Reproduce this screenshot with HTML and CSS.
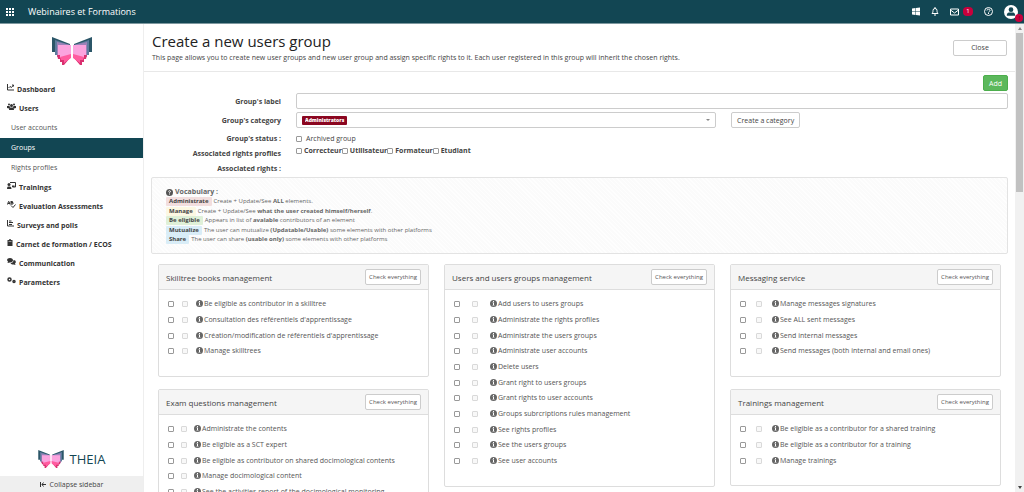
FILE: index.html
```
<!DOCTYPE html>
<html lang="en">
<head>
    <meta charset="UTF-8">
    <meta name="viewport" content="width=device-width, initial-scale=1.0">
    <title>Create a new users group</title>
    <link rel="stylesheet" href="styles.css">
</head>
<body>

<!-- Shared symbols -->
<svg class="symbols" aria-hidden="true">
    <symbol id="butterfly" viewBox="0 0 40 28">
        <g id="wing">
            <path fill="#2b5668" d="M0 0L18 7V9L5 17H3V15H0Z"/>
            <path fill="#5f7c9e" d="M3 3L18 8V12L5 20V18H3Z"/>
            <path fill="#9c82b8" d="M5 5L18 8V18L8 22V20H5Z"/>
            <path fill="#d9306f" d="M5 18H8V20L18 18V21L12 28H10V25H8V22H6Z"/>
            <path fill="#fba3de" d="M6 8H19V19L8 21V18H6Z"/>
            <path fill="#ff5b9f" d="M8 20L19 17V21L12 26V23H9Z"/>
        </g>
        <use href="#wing" transform="translate(40 0) scale(-1 1)"/>
    </symbol>
    <symbol id="info" viewBox="0 0 14 14">
        <circle cx="7" cy="7" r="7" fill="#666"/>
        <path fill="#fff" d="M6 2h2v2H6zM5 5h3v5h1v1H5v-1h1V6H5z"/>
    </symbol>
</svg>

<header class="topbar">
    <svg class="apps" viewBox="0 0 8 8"><path fill="#fff" d="M0 0h2v2H0zM3 0h2v2H3zM6 0h2v2H6zM0 3h2v2H0zM3 3h2v2H3zM6 3h2v2H6zM0 6h2v2H0zM3 6h2v2H3zM6 6h2v2H6z"/></svg>
    <span class="brand">Webinaires et Formations</span>
    <div class="tools">
        <svg class="windows" viewBox="0 0 16 16"><path fill="#fff" d="M0 2l7-1v7H0zM8 1l8-1v8H8zM0 9h7v6l-7-1zM8 9h8v7l-8-1z"/></svg>
        <svg class="bell" viewBox="0 0 16 18"><path fill="none" stroke="#fff" stroke-width="2" d="M2 13c2-2 2-4 2-6a4 4 0 0 1 8 0c0 2 0 4 2 6zM8 0v3M6 16h4"/></svg>
        <a href="#" class="mail" aria-label="Messages">
            <svg viewBox="0 0 18 14"><path fill="none" stroke="#fff" stroke-width="2" d="M1 1h16v12H1zM1 3l8 6 8-6"/></svg>
            <span class="count">1</span>
        </a>
        <svg class="help" viewBox="0 0 18 18"><circle cx="9" cy="9" r="8" fill="none" stroke="#fff" stroke-width="2"/><path fill="none" stroke="#fff" stroke-width="2" d="M6 7c0-4 6-3 6 0 0 2-3 2-3 4M9 12v2"/></svg>
        <div class="avatar">
            <svg viewBox="0 0 30 30"><circle cx="15" cy="15" r="15" fill="#fff"/><circle cx="15" cy="10" r="5" fill="#124653"/><path fill="#124653" d="M6 23c0-8 5-7 9-7s9-1 9 7z"/></svg>
            <span class="alert">!</span>
        </div>
    </div>
</header>

<div class="layout">
    <nav class="sidebar">
        <svg class="logo" viewBox="0 0 40 28"><use href="#butterfly"/></svg>
        <ul class="menu">
            <li><a href="#"><svg class="w7" viewBox="0 0 14 14"><path fill="none" stroke="#333" stroke-width="2" d="M1 0v12h13M3 8l3-3 3 2 4-5M10 2h3v3"/></svg>Dashboard</a></li>
            <li><a href="#"><svg class="w9" viewBox="0 0 18 14"><g fill="#333"><circle cx="4" cy="3" r="2"/><circle cx="14" cy="3" r="2"/><circle cx="9" cy="5" r="3"/><path d="M0 10V6h5l1 3-2 2zM18 10V6h-5l-1 3 2 2zM4 14c0-5 2-5 5-5s5 0 5 5z"/></g></svg>Users</a></li>
            <li class="sub"><a href="#">User accounts</a></li>
            <li class="sub active"><a href="#">Groups</a></li>
            <li class="sub"><a href="#">Rights profiles</a></li>
            <li><a href="#"><svg class="w9" viewBox="0 0 18 14"><path fill="none" stroke="#333" stroke-width="2" d="M6 1h11v9h-6"/><circle cx="4" cy="5" r="3" fill="#333"/><path fill="#333" d="M0 14c0-5 2-5 4-5s5 0 5 5zM10 7h5v3h-5z"/></svg>Trainings</a></li>
            <li><a href="#"><svg class="w9" viewBox="0 0 18 14"><path fill="none" stroke="#333" stroke-width="2" d="M1 7l2-6h1l2 6M2 5h4M8 0v7M8 1h3v2H8h4v3H8M8 9l4 4 5-6"/></svg>Evaluation Assessments</a></li>
            <li><a href="#"><svg class="w7" viewBox="0 0 14 14"><path fill="none" stroke="#333" stroke-width="2" d="M1 0v12h13M4 2h5M4 5h8M4 9h6"/></svg>Surveys and polls</a></li>
            <li><a href="#"><svg class="w6" viewBox="0 0 12 14"><path fill="#333" d="M1 2h3a2 2 0 0 1 4 0h3v12H1z"/><path fill="#fff" d="M3 4h6v1H3z"/></svg>Carnet de formation / ECOS</a></li>
            <li><a href="#"><svg class="w9" viewBox="0 0 18 14"><path fill="#333" d="M6 0c8 0 8 9 0 9l-5 1 1-3C-2 4 1 0 6 0z"/><path fill="#333" d="M13 4c5 0 6 5 3 7l1 3-4-1c-3 0-5-1-6-3 5 0 6-3 6-6z"/></svg>Communication</a></li>
            <li><a href="#"><svg class="w9" viewBox="0 0 18 14"><g fill="none" stroke="#333"><circle cx="5" cy="5" r="3" stroke-width="3"/><circle cx="14" cy="9" r="2" stroke-width="3"/></g></svg>Parameters</a></li>
        </ul>
        <div class="product">
            <svg viewBox="0 0 40 28"><use href="#butterfly"/></svg>
            <span>THEIA</span>
        </div>
        <button type="button" class="collapse"><svg viewBox="0 0 12 10"><path fill="none" stroke="#333" stroke-width="2" d="M1 0v10M12 5H4M7 1L4 5l3 4"/></svg>Collapse sidebar</button>
    </nav>

    <main class="content">
        <div class="page-head">
            <div>
                <h1>Create a new users group</h1>
                <p>This page allows you to create new user groups and new user group and assign specific rights to it. Each user registered in this group will inherit the chosen rights.</p>
            </div>
            <button type="button" class="btn close">Close</button>
        </div>

        <form class="group-form">
            <div class="actions"><button type="button" class="btn add">Add</button></div>
            <div class="form-row">
                <label for="label">Group's label</label>
                <input type="text" id="label">
            </div>
            <div class="form-row">
                <label for="category">Group's category</label>
                <div class="category">
                    <select id="category"><option>Administrators</option></select>
                    <button type="button" class="btn">Create a category</button>
                </div>
            </div>
            <div class="form-row short">
                <span class="name">Group's status :</span>
                <div class="checks light"><label><input type="checkbox">Archived group</label></div>
            </div>
            <div class="form-row short">
                <span class="name">Associated rights profiles</span>
                <div class="checks">
                    <label><input type="checkbox">Correcteur</label>
                    <label><input type="checkbox">Utilisateur</label>
                    <label><input type="checkbox">Formateur</label>
                    <label><input type="checkbox">Etudiant</label>
                </div>
            </div>
            <div class="form-row short">
                <span class="name">Associated rights :</span>
            </div>

            <div class="vocabulary">
                <h2><svg viewBox="0 0 14 14"><circle cx="7" cy="7" r="7" fill="#555"/><path fill="none" stroke="#fff" stroke-width="2" d="M5 5c0-2 4-2 4 0 0 1-2 1-2 3M7 9v2"/></svg>Vocabulary :</h2>
                <p><b class="tag red">Administrate</b>Create + Update/See <b>ALL</b> elements.</p>
                <p><b class="tag yellow">Manage</b>Create + Update/See <b>what the user created himself/herself</b>.</p>
                <p><b class="tag green">Be eligible</b>Appears in list of <b>avalable</b> contributors of an element</p>
                <p><b class="tag blue">Mutualize</b>The user can mutualize <b>(Updatable/Usable)</b> some elements with other platforms</p>
                <p><b class="tag blue">Share</b>The user can share <b>(usable only)</b> some elements with other platforms</p>
            </div>

            <div class="rights">
                <div class="column">
                    <section class="card">
                        <header><h3>Skilltree books management</h3><button type="button" class="btn">Check everything</button></header>
                        <ul>
                            <li><label><input type="checkbox"><input type="checkbox" disabled><svg><use href="#info"/></svg>Be eligible as contributor in a skilltree</label></li>
                            <li><label><input type="checkbox"><input type="checkbox" disabled><svg><use href="#info"/></svg>Consultation des référentiels d'apprentissage</label></li>
                            <li><label><input type="checkbox"><input type="checkbox" disabled><svg><use href="#info"/></svg>Création/modification de référentiels d'apprentissage</label></li>
                            <li><label><input type="checkbox"><input type="checkbox" disabled><svg><use href="#info"/></svg>Manage skilltrees</label></li>
                        </ul>
                    </section>
                    <section class="card narrow">
                        <header><h3>Exam questions management</h3><button type="button" class="btn">Check everything</button></header>
                        <ul>
                            <li><label><input type="checkbox"><input type="checkbox" disabled><svg><use href="#info"/></svg>Administrate the contents</label></li>
                            <li><label><input type="checkbox"><input type="checkbox" disabled><svg><use href="#info"/></svg>Be eligible as a SCT expert</label></li>
                            <li><label><input type="checkbox"><input type="checkbox" disabled><svg><use href="#info"/></svg>Be eligible as contributor on shared docimological contents</label></li>
                            <li><label><input type="checkbox"><input type="checkbox" disabled><svg><use href="#info"/></svg>Manage docimological content</label></li>
                            <li><label><input type="checkbox"><input type="checkbox" disabled><svg><use href="#info"/></svg>See the activities report of the docimological monitoring</label></li>
                        </ul>
                    </section>
                </div>
                <div class="column">
                    <section class="card wide">
                        <header><h3>Users and users groups management</h3><button type="button" class="btn">Check everything</button></header>
                        <ul>
                            <li><label><input type="checkbox"><input type="checkbox" disabled><svg><use href="#info"/></svg>Add users to users groups</label></li>
                            <li><label><input type="checkbox"><input type="checkbox" disabled><svg><use href="#info"/></svg>Administrate the rights profiles</label></li>
                            <li><label><input type="checkbox"><input type="checkbox" disabled><svg><use href="#info"/></svg>Administrate the users groups</label></li>
                            <li><label><input type="checkbox"><input type="checkbox" disabled><svg><use href="#info"/></svg>Administrate user accounts</label></li>
                            <li><label><input type="checkbox"><input type="checkbox" disabled><svg><use href="#info"/></svg>Delete users</label></li>
                            <li><label><input type="checkbox"><input type="checkbox" disabled><svg><use href="#info"/></svg>Grant right to users groups</label></li>
                            <li><label><input type="checkbox"><input type="checkbox" disabled><svg><use href="#info"/></svg>Grant rights to user accounts</label></li>
                            <li><label><input type="checkbox"><input type="checkbox" disabled><svg><use href="#info"/></svg>Groups subrcriptions rules management</label></li>
                            <li><label><input type="checkbox"><input type="checkbox" disabled><svg><use href="#info"/></svg>See rights profiles</label></li>
                            <li><label><input type="checkbox"><input type="checkbox" disabled><svg><use href="#info"/></svg>See the users groups</label></li>
                            <li><label><input type="checkbox"><input type="checkbox" disabled><svg><use href="#info"/></svg>See user accounts</label></li>
                        </ul>
                    </section>
                </div>
                <div class="column">
                    <section class="card medium">
                        <header><h3>Messaging service</h3><button type="button" class="btn">Check everything</button></header>
                        <ul>
                            <li><label><input type="checkbox"><input type="checkbox" disabled><svg><use href="#info"/></svg>Manage messages signatures</label></li>
                            <li><label><input type="checkbox"><input type="checkbox" disabled><svg><use href="#info"/></svg>See ALL sent messages</label></li>
                            <li><label><input type="checkbox"><input type="checkbox" disabled><svg><use href="#info"/></svg>Send internal messages</label></li>
                            <li><label><input type="checkbox"><input type="checkbox" disabled><svg><use href="#info"/></svg>Send messages (both internal and email ones)</label></li>
                        </ul>
                    </section>
                    <section class="card medium">
                        <header><h3>Trainings management</h3><button type="button" class="btn">Check everything</button></header>
                        <ul>
                            <li><label><input type="checkbox"><input type="checkbox" disabled><svg><use href="#info"/></svg>Be eligible as a contributor for a shared training</label></li>
                            <li><label><input type="checkbox"><input type="checkbox" disabled><svg><use href="#info"/></svg>Be eligible as a contributor for a training</label></li>
                            <li><label><input type="checkbox"><input type="checkbox" disabled><svg><use href="#info"/></svg>Manage trainings</label></li>
                        </ul>
                    </section>
                </div>
            </div>
        </form>
    </main>

    <div class="scrollbar" aria-hidden="true">
        <svg viewBox="0 0 9 9"><path fill="#888" d="M3 6l2-3 2 3z"/></svg>
        <div class="thumb"></div>
        <svg viewBox="0 0 9 9"><path fill="#444" d="M3 3l2 3 2-3z"/></svg>
    </div>
</div>

</body>
</html>
```
FILE: styles.css
```
* {
    box-sizing: border-box;
}
body {
    display: flex;
    flex-direction: column;
    height: 100vh;
    margin: 0;
    overflow: hidden;
    font-family: "Open Sans", sans-serif;
    font-size: 7px;
    color: #444;
    background-color: #fff;
}
h1, h2, h3, p, ul {
    margin: 0;
    padding: 0;
}
ul {
    list-style: none;
}
a {
    color: inherit;
    text-decoration: none;
}
svg {
    flex: none;
}
button, input, select {
    font-family: inherit;
    font-size: 7px;
    color: inherit;
}
.symbols {
    position: absolute;
    width: 0;
    height: 0;
}

/* Top bar */
.topbar {
    display: flex;
    align-items: center;
    flex: none;
    height: 24px;
    padding: 0 6px;
    color: #fff;
    background-color: #124653;
    border-bottom: 1px solid #7d989f;
}
.apps {
    width: 8px;
    height: 8px;
}
.brand {
    margin-left: 14px;
    font-size: 9px;
    font-weight: 500;
}
.tools {
    display: flex;
    align-items: center;
    gap: 11px;
    margin-left: auto;
}
.windows, .bell {
    width: 8px;
    height: 9px;
}
.mail {
    display: flex;
    align-items: center;
    gap: 4px;
}
.mail svg {
    width: 9px;
    height: 8px;
}
.count {
    width: 10px;
    line-height: 9px;
    font-size: 6px;
    text-align: center;
    background-color: #c8003c;
    border-radius: 4px;
}
.help {
    width: 9px;
    height: 9px;
}
.avatar {
    position: relative;
    height: 14px;
}
.avatar svg {
    width: 14px;
    height: 14px;
}
.alert {
    position: absolute;
    right: -5px;
    bottom: -3px;
    width: 8px;
    line-height: 8px;
    font-size: 6px;
    text-align: center;
    color: #5d0a25;
    background-color: #c8003c;
    border-radius: 50%;
}

.layout {
    display: flex;
    flex: 1;
    min-height: 0;
}

/* Sidebar */
.sidebar {
    display: flex;
    flex-direction: column;
    flex: none;
    width: 144px;
    border-right: 1px solid #eee;
}
.logo {
    align-self: center;
    width: 40px;
    height: 28px;
    margin: 13px 0 15px;
}
.menu li {
    height: 19px;
    line-height: 19px;
    font-weight: 700;
    color: #333;
}
.menu a {
    display: flex;
    gap: 3px;
    padding-left: 7px;
}
.menu svg {
    height: 7px;
    margin-top: 4px;
}
.w6 {
    width: 6px;
}
.w7 {
    width: 7px;
}
.w9 {
    width: 9px;
}
.menu .sub {
    height: 20px;
    line-height: 20px;
    font-weight: 400;
    color: #555;
}
.menu .sub a {
    padding-left: 11px;
}
.menu .active {
    font-weight: 500;
    color: #fff;
    background-color: #124653;
}
.product {
    display: flex;
    align-items: center;
    justify-content: center;
    gap: 6px;
    margin-top: auto;
    margin-bottom: 8px;
    line-height: 18px;
    font-size: 13px;
    color: #124653;
}
.product svg {
    width: 26px;
    height: 18px;
}
.collapse {
    display: flex;
    align-items: center;
    justify-content: center;
    gap: 4px;
    height: 16px;
    border: none;
    background-color: #efefef;
}
.collapse svg {
    width: 6px;
    height: 5px;
}

/* Page heading */
.content {
    flex: 1;
    min-width: 0;
    overflow: hidden;
}
.page-head {
    display: flex;
    align-items: center;
    justify-content: space-between;
    height: 48px;
    padding: 0 8px;
    border-bottom: 1px solid #e8e8e8;
}
h1 {
    line-height: 20px;
    font-size: 15px;
    font-weight: 500;
    color: #222;
}
.page-head p {
    line-height: 14px;
    font-weight: 500;
}
.btn {
    height: 16px;
    padding: 0 5px;
    white-space: nowrap;
    background-color: #fff;
    border: 1px solid #ccc;
    border-radius: 2px;
}
.close {
    width: 54px;
}
.add {
    width: 25px;
    padding: 0;
    color: #fff;
    background-color: #5cb85c;
    border-color: #4cae4c;
}

/* Form */
.group-form {
    padding: 3px 7px;
}
.actions {
    display: flex;
    justify-content: flex-end;
    margin-bottom: 2px;
}
.form-row {
    display: grid;
    grid-template-columns: 130px 1fr;
    column-gap: 15px;
    align-items: center;
    height: 16px;
    margin-bottom: 3px;
}
.form-row.short {
    height: 15px;
    margin-bottom: 0;
}
.form-row > label, .name {
    font-weight: 700;
    text-align: right;
    white-space: nowrap;
}
input[type="text"] {
    width: 100%;
    height: 16px;
    border: 1px solid #ccc;
    border-radius: 2px;
}
.category {
    display: flex;
    gap: 15px;
}
select {
    width: 59%;
    height: 16px;
    padding: 0 8px;
    font-size: 5px;
    font-weight: 800;
    color: #fff;
    appearance: none;
    border: 1px solid #ccc;
    border-radius: 2px;
    background: url("data:image/svg+xml,%3Csvg xmlns='http://www.w3.org/2000/svg' width='45' height='9'%3E%3Crect width='45' height='9' rx='1' fill='%238b0620'/%3E%3C/svg%3E") 5px center no-repeat,
        url("data:image/svg+xml,%3Csvg xmlns='http://www.w3.org/2000/svg' width='4' height='2'%3E%3Cpath d='M0 0h4L2 2z' fill='%23888'/%3E%3C/svg%3E") right 5px center no-repeat;
}
.checks {
    display: flex;
    align-self: start;
    font-weight: 700;
}
.checks.light {
    align-self: center;
    font-weight: 400;
}
.checks label {
    display: flex;
    align-items: center;
    gap: 2px;
}
.checks.light label {
    gap: 4px;
}
input[type="checkbox"] {
    flex: none;
    width: 6px;
    height: 6px;
    margin: 0;
    appearance: none;
    background-color: #fff;
    border: 1px solid #999;
    border-radius: 1px;
}
input[type="checkbox"]:disabled {
    background-color: #f8f8f8;
    border-color: #d9d9d9;
}

/* Vocabulary */
.vocabulary {
    margin-top: 1px;
    padding: 9px 14px 8px;
    color: #666;
    background: repeating-linear-gradient(45deg, #fefefe 0 1px, #fbfbfb 1px 3px);
    border: 1px solid #e3e3e3;
    border-radius: 2px;
}
.vocabulary h2 {
    display: flex;
    align-items: center;
    gap: 2px;
    line-height: 10px;
    font-size: 7px;
}
.vocabulary h2 svg {
    width: 7px;
    height: 7px;
}
.vocabulary p {
    height: 9px;
    line-height: 9px;
    font-size: 6px;
}
.vocabulary p:nth-child(even) {
    height: 10px;
}
.tag {
    display: inline-block;
    height: 9px;
    margin-right: 2px;
    padding: 0 3px;
    line-height: 9px;
    color: #444;
    border-radius: 1px;
}
.red {
    background-color: #f2dede;
}
.yellow {
    background-color: #fcf8e3;
}
.green {
    background-color: #dff0d8;
}
.blue {
    background-color: #d9edf7;
}

/* Rights cards */
.rights {
    display: grid;
    grid-template-columns: repeat(3, 1fr);
    gap: 15px;
    padding: 10px 7px;
}
.card {
    --step: 8px;
    margin-bottom: 12px;
    padding-bottom: 17px;
    color: #555;
    border: 1px solid #ddd;
    border-radius: 2px;
}
.card.narrow {
    --step: 7px;
}
.card.medium {
    --step: 10px;
}
.card.wide {
    --step: 12px;
}
.card header {
    display: flex;
    align-items: center;
    justify-content: space-between;
    height: 25px;
    padding: 0 7px;
    background-color: #f5f5f5;
    border-bottom: 1px solid #ddd;
}
.card h3 {
    font-size: 8px;
    font-weight: 500;
    color: #444;
}
.card .btn {
    padding: 0 3px;
    font-size: 6px;
}
.card ul {
    padding: 6px 9px 0;
}
.card li {
    height: 16px;
}
.card li:nth-child(3n) {
    height: 15px;
}
.card label {
    display: flex;
    align-items: center;
    height: 15px;
    white-space: nowrap;
}
.card input {
    margin-right: var(--step);
}
.card label svg {
    width: 7px;
    height: 7px;
    margin-right: 1px;
}

/* Scrollbar */
.scrollbar {
    display: flex;
    flex-direction: column;
    flex: none;
    width: 9px;
    background-color: #f1f1f1;
}
.scrollbar svg {
    width: 9px;
    height: 9px;
}
.thumb {
    height: 34%;
    margin: 0 1px auto;
    background-color: #c1c1c1;
}
```
